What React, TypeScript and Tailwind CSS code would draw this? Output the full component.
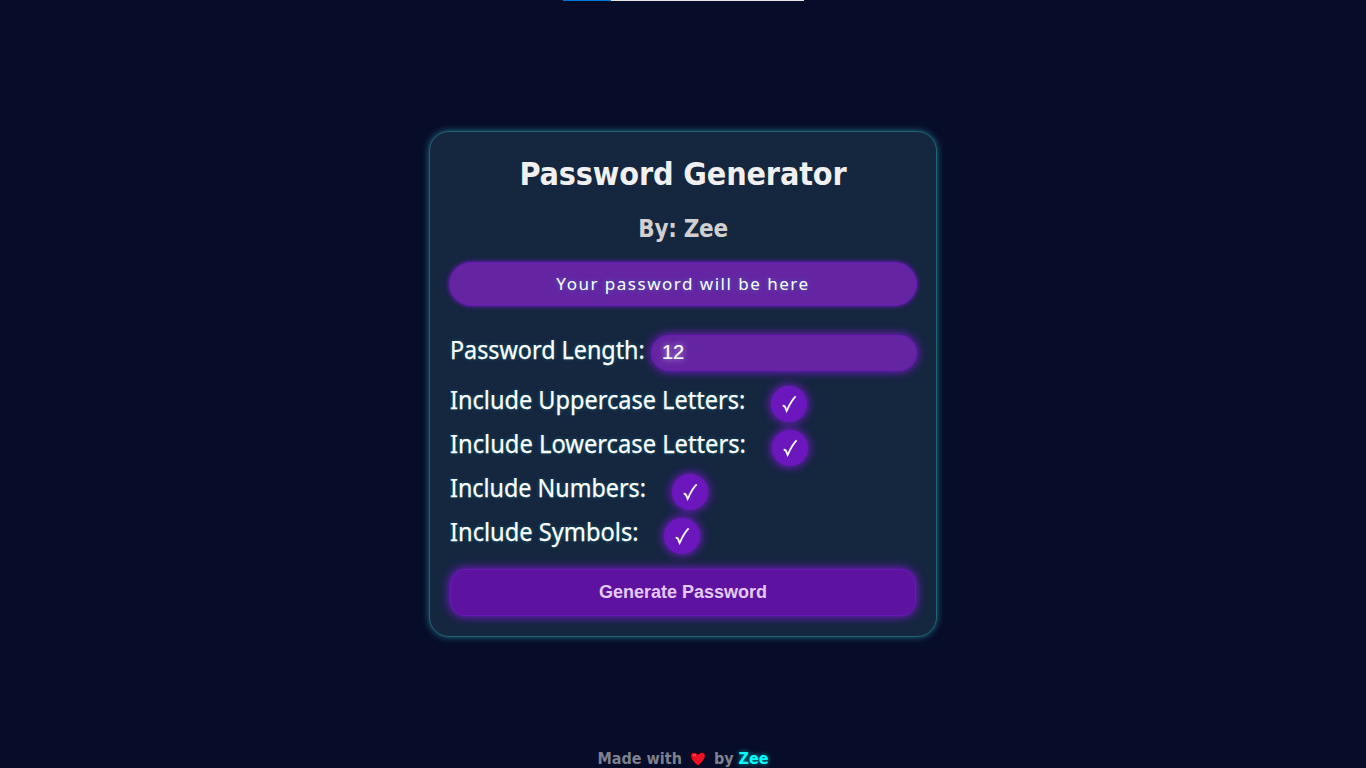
const options = [
  { label: "Include Uppercase Letters:", width: "w-[321px]", scale: "scale-x-[.905]" },
  { label: "Include Lowercase Letters:", width: "w-[322px]", scale: "scale-x-[.912]" },
  { label: "Include Numbers:", width: "w-[222px]", scale: "scale-x-[.897]" },
  { label: "Include Symbols:", width: "w-[214px]", scale: "scale-x-[.91]" },
];

const glow = "[text-shadow:0_0_5px_#00ffff55]";
const labelStyle = "[-webkit-text-stroke:0.25px_white] [text-shadow:0_0_5px_#00ffff44]";
const boldFont = "font-['DejaVu_Sans_Condensed','DejaVu_Sans',sans-serif] [font-stretch:condensed]";

function Check() {
  return (
    <span className="mt-[2px] flex h-9 w-9 items-center justify-center rounded-full bg-[#6c17bd] shadow-[0_0_10px_1px_#7c19d2]">
      <svg width="16" height="18" viewBox="0 0 16 18" fill="none" stroke="white">
        <path d="M1.7 10.8Q3.7 10.4 4.6 13.3L5.6 15.9L6.6 14Q10 6 14.6 1.3" strokeWidth="1.8" />
      </svg>
    </span>
  );
}

export default function App() {
  return (
    <div className="flex h-[768px] w-full flex-col items-center overflow-hidden bg-[#070d28] font-['Noto_Sans',sans-serif] text-white">
      <div className="flex h-px w-[241px] shrink-0 self-start ml-[563px] bg-[#e5e5e5]">
        <div className="h-px w-12 bg-[#0078d7]" />
      </div>
      <main className="mt-[130px] flex h-[506px] w-[508px] shrink-0 flex-col rounded-[20px] border border-[#206373] bg-[#15263f] px-5 shadow-[0_0_7px_#278698cc]">
        <h1 className={`mt-[18px] h-12 whitespace-nowrap text-center text-[32px] leading-[48px] font-bold tracking-[-0.15px] text-[#f0f0f0] ${boldFont}`}>Password Generator</h1>
        <h2 className={`mt-[13px] h-9 whitespace-nowrap text-center text-[24px] leading-9 font-bold tracking-[-0.3px] text-[#d0d0d0] ${boldFont}`}>By: Zee</h2>
        <div className="-mx-px mt-[15px] flex h-11 items-center justify-center rounded-[22px] border border-[#6819b3] bg-[#6525a2] shadow-[0_0_5px_#7819cd]">
          <span className={`whitespace-nowrap text-[17px] tracking-[1.5px] ${glow}`}>Your password will be here</span>
        </div>
        <div className="mt-[29px] flex h-9">
          <label className={`-mt-[4px] w-[201px] shrink-0 origin-left scale-x-[.897] whitespace-nowrap text-[26px] leading-9 ${labelStyle}`}>Password Length:</label>
          <div className="h-9 w-[266px] shrink-0 rounded-[18px] border border-[#6a1db3] bg-[#6525a2] px-[10px] font-['Liberation_Sans',sans-serif] text-[20px] leading-[33px] shadow-[0_0_10px_1px_#7819cd] [-webkit-text-stroke:0.2px_white] [text-shadow:0_0_6px_#ffffffaa]">12</div>
        </div>
        <div className="mt-[13px] flex flex-col">
          {options.map((option) => (
            <div className="flex h-11" key={option.label}>
              <span className={`${option.width} ${option.scale} origin-left -mt-[3px] shrink-0 whitespace-nowrap text-[26px] leading-9 ${labelStyle}`}>{option.label}</span>
              <Check />
            </div>
          ))}
        </div>
        <button className="mt-[9px] h-[47px] rounded-[15px] border border-[#6b18b9] bg-[#5d13a0] font-['Liberation_Sans',sans-serif] text-[18px] font-bold text-[#e4cafa] shadow-[0_0_10px_1px_#7819cd]">Generate Password</button>
      </main>
      <footer className={`mt-[110px] flex h-6 shrink-0 items-center whitespace-nowrap text-[16px] font-bold text-[#7d808e] ${boldFont}`}>
        <span>Made with</span>
        <svg className="mx-2 -mt-px" width="16" height="16" viewBox="0 0 16 16">
          <path d="M8 15C4 12 .7 8 .7 4.8C.7 1 5.4.2 8 3.5C10.6.2 15.3 1 15.3 4.8C15.3 8 12 12 8 15Z" fill="#e81224" stroke="#160b1b" />
          <path d="M3.3 4.6C3.7 3.6 5 3.6 5.7 4.2" fill="none" stroke="#f47b82" strokeLinecap="round" />
        </svg>
        <span>by <b className="text-[#00ffff] [text-shadow:0_0_5px_#00ffff99]">Zee</b></span>
      </footer>
    </div>
  );
}
